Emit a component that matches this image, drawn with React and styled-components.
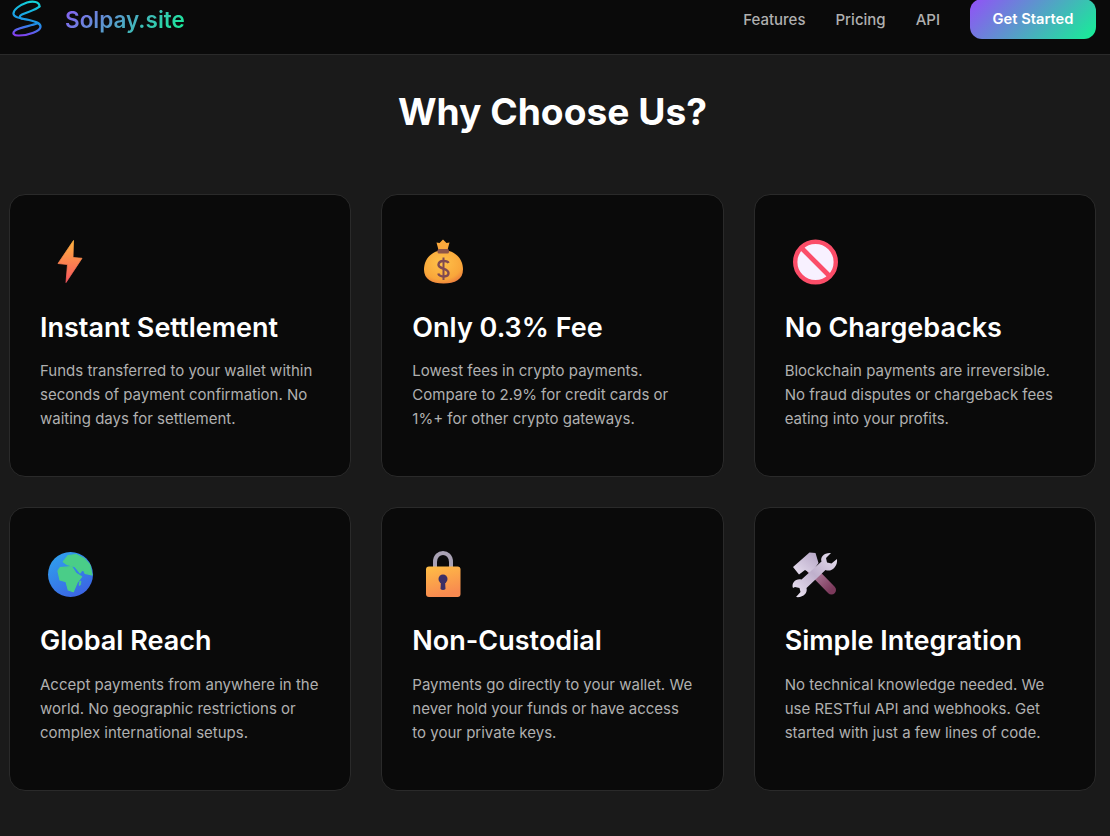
import React from 'react';
import styled, { createGlobalStyle } from 'styled-components';

const GlobalStyle = createGlobalStyle`
  * {
    box-sizing: border-box;
  }

  body {
    margin: 0;
    background: #1a1a1a;
    color: #fff;
    font-family: Inter, "Noto Sans", sans-serif;
  }
`;

const Page = styled.div`
  height: 836px;
  overflow: hidden;
`;

const Nav = styled.nav`
  height: 55px;
  padding: 0 14px 16px 0;
  display: flex;
  align-items: center;
  justify-content: space-between;
  background: #0a0a0a;
  border-bottom: 1px solid #2a2a2a;
`;

const Brand = styled.div`
  display: flex;
  align-items: center;
  gap: 11px;
`;

const BrandName = styled.span`
  font-size: 22.5px;
  font-weight: 600;
  background: linear-gradient(135deg, #8b5cf6, #14f195);
  -webkit-background-clip: text;
  background-clip: text;
  color: transparent;
`;

const NavLinks = styled.div`
  display: flex;
  align-items: center;
  gap: 30px;
`;

const NavLink = styled.a`
  font-size: 15px;
  font-weight: 500;
  color: #b0b0b0;
`;

const StartButton = styled.button`
  width: 126px;
  height: 40px;
  flex: none;
  border: 0;
  border-radius: 12px;
  background: linear-gradient(135deg, #9350f8, #14f195);
  color: #fff;
  font-family: inherit;
  font-size: 14.7px;
  font-weight: 600;
`;

const Section = styled.section`
  padding: 30px 14px 0 9px;
`;

const Heading = styled.h2`
  margin: 0 0 55px;
  font-size: 37.2px;
  line-height: 54px;
  font-weight: 700;
  text-align: center;
`;

const Grid = styled.div`
  display: grid;
  grid-template-columns: repeat(3, 1fr);
  grid-auto-rows: 283.4px;
  gap: 30px;
`;

const Card = styled.article`
  padding: 30px;
  background: #0a0a0a;
  border: 1px solid #2a2a2a;
  border-radius: 16px;
`;

const IconBox = styled.div`
  width: 60px;
  height: 60px;
  margin: 5px 0 0 ${(p) => p.$shift || 0}px;

  svg {
    display: block;
  }
`;

const CardTitle = styled.h3`
  margin: 20px 0 13.4px;
  font-size: 27px;
  line-height: 36px;
  font-weight: 600;
`;

const CardText = styled.p`
  margin: 0;
  font-size: 15px;
  line-height: 24px;
  color: #b0b0b0;
`;

function Logo() {
  return (
    <svg width="54" height="38" viewBox="0 0 54 38" fill="none">
      <defs>
        <linearGradient id="logoStroke" gradientUnits="userSpaceOnUse" x1="30" y1="1" x2="24" y2="37">
          <stop offset="0" stopColor="#12d3d8" />
          <stop offset="0.6" stopColor="#1e90e8" />
          <stop offset="1" stopColor="#8a3cf0" />
        </linearGradient>
      </defs>
      <g stroke="url(#logoStroke)" strokeWidth="2.2" strokeLinecap="round">
        <path d="M39.500 6.500C39.500 1.500 33 0.800 27 2.500C20 5 13 9.500 13.500 14C14 18 23 18.500 29 20C35 21.500 41 23 40.500 27C40 31 29 35.500 19 35.500C13.500 35.800 12 33 15 30.500C19 27.500 30 26 37 23.500" />
        <path d="M39.500 6.500C36 10 27 12 22 14.500C19 16 19 18 22 18.800" />
      </g>
    </svg>
  );
}

function BoltIcon() {
  return (
    <svg width="60" height="60" viewBox="0 0 60 60">
      <defs>
        <linearGradient id="boltFill" x1="0" y1="0" x2="0" y2="1">
          <stop offset="0" stopColor="#ffb23f" />
          <stop offset="1" stopColor="#f8565f" />
        </linearGradient>
      </defs>
      <path
        d="M33.500 10.500L18 33.500L27.500 34.500L26 52.500L42 28.300L33 27.500Z"
        fill="url(#boltFill)"
        stroke="url(#boltFill)"
        strokeWidth="0.800"
        strokeLinejoin="round"
      />
    </svg>
  );
}

function BagIcon() {
  return (
    <svg width="60" height="60" viewBox="0 0 60 60">
      <defs>
        <radialGradient id="bagFill" cx="0.45" cy="0.35" r="0.75">
          <stop offset="0" stopColor="#ffc24a" />
          <stop offset="0.7" stopColor="#f9a63a" />
          <stop offset="1" stopColor="#e8703f" />
        </radialGradient>
      </defs>
      <path d="M23.500 12.500L26.500 13L30 9.500L33.500 13L36.500 12.500L34.500 20H25.500Z" fill="#fba83c" />
      <path d="M25 21C16 23.500 11 31 11 39.500C11 49.500 19 53.500 30.500 53.500C42 53.500 50 49.500 50 39.500C50 31 45 23.500 36 21Z" fill="url(#bagFill)" />
      <rect x="24.500" y="19" width="11.500" height="4.500" rx="1.500" fill="#8f5648" />
      <path d="M35.500 33C34.500 30.500 26 29.500 25.500 34.500C25 39.500 35.500 37.500 35.500 43C35.500 47.500 26.500 47.500 25.300 43.500" fill="none" stroke="#7f4a52" strokeWidth="2.400" />
      <path d="M30.500 27.500V50" stroke="#7f4a52" strokeWidth="2" />
    </svg>
  );
}

function NoEntryIcon() {
  return (
    <svg width="60" height="60" viewBox="0 0 60 60">
      <circle cx="30.500" cy="32" r="20.300" fill="#f8f1ff" stroke="#fb4d68" strokeWidth="4.400" />
      <path d="M16 17.500L45 46.500" stroke="#fb4d68" strokeWidth="4.800" />
    </svg>
  );
}

function GlobeIcon() {
  return (
    <svg width="60" height="60" viewBox="0 0 60 60">
      <defs>
        <linearGradient id="seaFill" x1="0" y1="0" x2="0.6" y2="1">
          <stop offset="0" stopColor="#2ea6ee" />
          <stop offset="1" stopColor="#3b66e4" />
        </linearGradient>
        <clipPath id="globeClip">
          <circle cx="30.500" cy="31.500" r="22.500" />
        </clipPath>
      </defs>
      <circle cx="30.500" cy="31.500" r="22.500" fill="url(#seaFill)" />
      <g clipPath="url(#globeClip)" fill="#4acd88" stroke="#4acd88" strokeWidth="1.200" strokeLinejoin="round">
        <path d="M18 28L20 24.700L31.700 23.700L36 30.300L41.700 33.700L37.300 39.300L33.300 48.700L28.300 47L26 38.700L20 37Z" />
        <path d="M23.300 18.700L28.300 12.500L36 11.500L44 15.500L50 22L52 32L45 30.300L43 26L40 30L35 23.700L26.700 21.300Z" />
        <path d="M39.500 38.500L41 38L40.500 42L39 42.500Z" strokeWidth="0.500" />
      </g>
    </svg>
  );
}

function LockIcon() {
  return (
    <svg width="60" height="60" viewBox="0 0 60 60">
      <defs>
        <linearGradient id="lockFill" x1="0" y1="0" x2="0.3" y2="1">
          <stop offset="0" stopColor="#ffbe45" />
          <stop offset="1" stopColor="#f88a50" />
        </linearGradient>
      </defs>
      <path d="M22 25V19C22 7 38 7 38 19V25" fill="none" stroke="#a9a2b4" strokeWidth="4" />
      <rect x="13" y="23.500" width="34.500" height="30.500" rx="3" fill="url(#lockFill)" />
      <circle cx="30" cy="36" r="4.500" fill="#3c2f66" />
      <path d="M28 37H32L32.500 46C31.300 47.300 28.700 47.300 27.500 46Z" fill="#3c2f66" />
    </svg>
  );
}

function ToolsIcon() {
  return (
    <svg width="60" height="60" viewBox="0 0 60 60">
      <defs>
        <linearGradient id="handleFill" x1="0" y1="0" x2="1" y2="1">
          <stop offset="0" stopColor="#b88aa8" />
          <stop offset="1" stopColor="#7c3a5c" />
        </linearGradient>
        <linearGradient id="headFill" x1="0" y1="1" x2="1" y2="0">
          <stop offset="0" stopColor="#e8e0f0" />
          <stop offset="1" stopColor="#b4a4c4" />
        </linearGradient>
        <linearGradient id="wrenchFill" x1="0" y1="1" x2="1" y2="0">
          <stop offset="0" stopColor="#efe8f6" />
          <stop offset="0.5" stopColor="#bfb0cc" />
          <stop offset="1" stopColor="#e8e0f0" />
        </linearGradient>
      </defs>
      <path d="M26 26L46.500 47" stroke="url(#handleFill)" strokeWidth="9" strokeLinecap="round" />
      <path d="M8 24L24.500 9.500L30.500 10L33.500 20L26 30.500L20 27L14 31.500Z" fill="url(#headFill)" />
      <path d="M8 45C6 40 11 35 16.500 36.500L36.500 18.500C35 14 39 9.500 46 10L41 15L42 19.500L46.500 20.500L52 16C53 24 46 29.500 40.500 27L21.500 45C23 50 18 55 11 54L15.500 49L14.500 45L10 44Z" fill="url(#wrenchFill)" />
    </svg>
  );
}

const features = [
  {
    icon: <BoltIcon />,
    title: 'Instant Settlement',
    text: 'Funds transferred to your wallet within seconds of payment confirmation. No waiting days for settlement.',
  },
  {
    icon: <BagIcon />,
    title: 'Only 0.3% Fee',
    text: 'Lowest fees in crypto payments. Compare to 2.9% for credit cards or 1%+ for other crypto gateways.',
    shift: 1,
  },
  {
    icon: <NoEntryIcon />,
    title: 'No Chargebacks',
    text: 'Blockchain payments are irreversible. No fraud disputes or chargeback fees eating into your profits.',
  },
  {
    icon: <GlobeIcon />,
    title: 'Global Reach',
    text: 'Accept payments from anywhere in the world. No geographic restrictions or complex international setups.',
  },
  {
    icon: <LockIcon />,
    title: 'Non-Custodial',
    text: 'Payments go directly to your wallet. We never hold your funds or have access to your private keys.',
    shift: 1,
  },
  {
    icon: <ToolsIcon />,
    title: 'Simple Integration',
    text: 'No technical knowledge needed. We use RESTful API and webhooks. Get started with just a few lines of code.',
  },
];

function App() {
  return (
    <Page>
      <GlobalStyle />
      <Nav>
        <Brand>
          <Logo />
          <BrandName>Solpay.site</BrandName>
        </Brand>
        <NavLinks>
          <NavLink>Features</NavLink>
          <NavLink>Pricing</NavLink>
          <NavLink>API</NavLink>
          <StartButton>Get Started</StartButton>
        </NavLinks>
      </Nav>
      <Section>
        <Heading>Why Choose Us?</Heading>
        <Grid>
          {features.map((item) => (
            <Card key={item.title}>
              <IconBox $shift={item.shift}>{item.icon}</IconBox>
              <CardTitle>{item.title}</CardTitle>
              <CardText>{item.text}</CardText>
            </Card>
          ))}
        </Grid>
      </Section>
    </Page>
  );
}

export default App;
